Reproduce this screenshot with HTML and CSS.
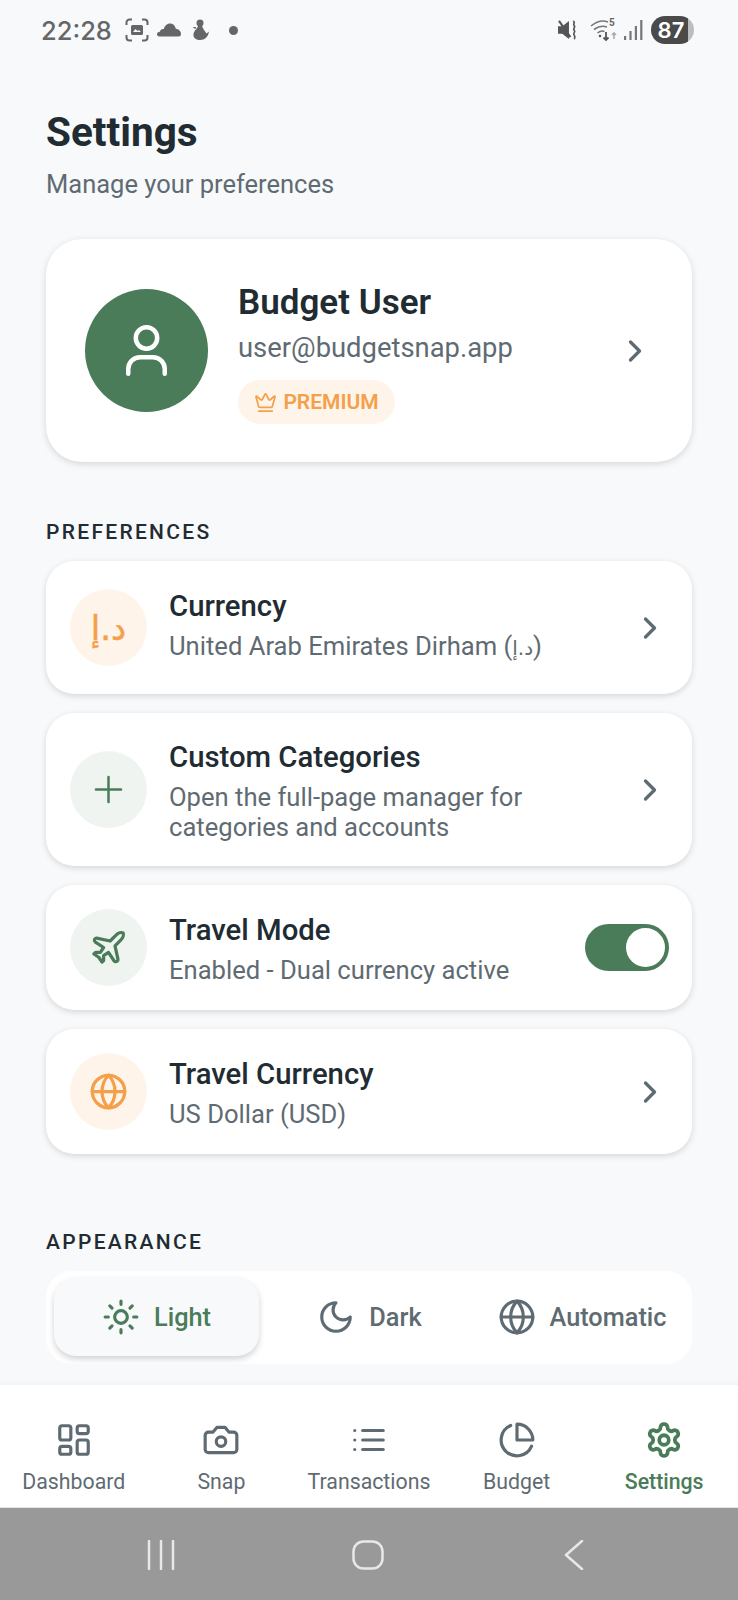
FILE: index.html
```html
<!DOCTYPE html>
<html lang="en">
<head>
<meta charset="utf-8">
<title>Settings</title>
<link rel="stylesheet" href="styles.css">
</head>
<body>
<svg class="defs" width="0" height="0" aria-hidden="true">
  <symbol id="chev" viewBox="0 0 24 24"><path d="m9 18 6-6-6-6"/></symbol>
  <symbol id="globe" viewBox="0 0 24 24"><circle cx="12" cy="12" r="10"/><path d="M12 2a14.5 14.5 0 0 0 0 20 14.5 14.5 0 0 0 0-20"/><path d="M2 12h20"/></symbol>
</svg>
<div class="app">
  <header class="status">
    <div class="status-left">
      <span class="time">22:28</span>
      <svg class="st st-shot" viewBox="0 0 24 24"><path d="M1.5 7V4.5a3 3 0 0 1 3-3H7M17 1.500h2.500a3 3 0 0 1 3 3V7M22.500 17v2.500a3 3 0 0 1-3 3H17M7 22.500H4.500a3 3 0 0 1-3-3V17" fill="none" stroke="#666" stroke-width="2"/><rect x="6" y="7" width="12" height="10" rx="1.500" fill="#666"/><path d="m8 14 2.500-3 2 2 1.500-1 2 2z" fill="#f8f9fb"/></svg>
      <svg class="st st-cloud" viewBox="0 0 24 14"><path d="M2.500 13.500C.6 13.500 0 12.400 0 11.300c0-1.500 1.200-2.600 2.900-2.600C3.400 6.800 5 5.800 6.600 6.200 7.700 2.500 10.300.5 13 .5c3 0 5.300 2.200 5.800 5.300 2.900.2 5.200 2.500 5.200 5.200 0 1.700-1 2.500-2.500 2.500z" fill="#666"/></svg>
      <svg class="st st-duck" viewBox="0 0 18 22"><circle cx="8" cy="4" r="3.500" fill="#666"/><path d="M6 7c-.6 2.500-4 4.500-4.500 8C1 18.500 3.500 21 8 21c5 0 8-3 9-8.500l-2.500 2C13 12 11 10 10 7z" fill="#666"/><path d="M1 8h3v1.500H2z" fill="#666"/></svg>
      <span class="st-dot"></span>
    </div>
    <div class="status-right">
      <svg class="st st-mute" viewBox="0 0 22 21"><path d="M0 6.500v8h4.500l7 5.500V1l-7 5.500z" fill="#555"/><path d="M1 1l12 17" stroke="#555" stroke-width="2.200"/><path d="M16 1c3 2-1 3 1 5s-2 3 0 5-2 3 0 5-1 3 1 4" fill="none" stroke="#555" stroke-width="1.800"/></svg>
      <svg class="st st-wifi" viewBox="0 0 28 24"><path d="M1 8c6-5 12-6 17-4M4 11.500c4-3 9-4 13-2.500M7.500 15c2.500-2 5-2.500 7-1.500" fill="none" stroke="#777" stroke-width="1.600"/><circle cx="10" cy="18" r="1.300" fill="#555"/><path d="M16 14v8m-2.500-2.500L16 22l2.500-2.500" fill="none" stroke="#555" stroke-width="1.800"/><path d="M24 21v-6m-2 2 2-2 2 2" fill="none" stroke="#aaa" stroke-width="1.600"/><text x="19" y="8" class="wifi-five">5</text></svg>
      <svg class="st st-signal" viewBox="0 0 19 20"><rect x="0" y="16" width="2.200" height="4" fill="#777"/><rect x="5.400" y="11" width="2.200" height="9" fill="#777"/><rect x="10.800" y="6" width="2.200" height="14" fill="#777"/><rect x="16.200" y="0" width="2.200" height="20" fill="#777"/></svg>
      <span class="battery"><span class="battery-num">87</span></span>
    </div>
  </header>

  <main class="content">
    <h1 class="page-title">Settings</h1>
    <p class="page-sub">Manage your preferences</p>

    <section class="profile">
      <div class="avatar">
        <svg class="avatar-ico" viewBox="0 0 41 51"><circle cx="20.500" cy="13" r="10.700"/><path d="M2.250 48.750V44a11.800 11.800 0 0 1 11.800-11.800h12.900a11.800 11.800 0 0 1 11.800 11.800v4.750"/></svg>
      </div>
      <div class="profile-text">
        <div class="profile-name">Budget User</div>
        <div class="profile-mail">user@budgetsnap.app</div>
        <span class="badge">
          <svg class="badge-ico" viewBox="0 0 24 24"><path d="M11.562 3.266a.5.5 0 0 1 .876 0L15.390 8.870a1 1 0 0 0 1.516.294L21.183 5.500a.5.5 0 0 1 .798.519l-2.834 10.246a1 1 0 0 1-.956.734H5.810a1 1 0 0 1-.957-.734L2.020 6.020a.5.5 0 0 1 .798-.519l4.276 3.664a1 1 0 0 0 1.516-.294z"/><path d="M5 21h14"/></svg>
          PREMIUM
        </span>
      </div>
      <svg class="chev"><use href="#chev"/></svg>
    </section>

    <h2 class="section-label">PREFERENCES</h2>
    <div class="rows">
      <div class="row row-tall">
        <span class="ico-wrap ico-orange"><span class="aed">د.إ</span></span>
        <div class="row-text"><div class="row-title">Currency</div><div class="row-sub">United Arab Emirates Dirham (<span class="ar">د.إ</span>)</div></div>
        <svg class="chev"><use href="#chev"/></svg>
      </div>
      <div class="row">
        <span class="ico-wrap ico-green"><svg class="ico ico-plus" viewBox="0 0 24 24"><path d="M5 12h14M12 5v14"/></svg></span>
        <div class="row-text"><div class="row-title">Custom Categories</div><div class="row-sub">Open the full-page manager for<br>categories and accounts</div></div>
        <svg class="chev"><use href="#chev"/></svg>
      </div>
      <div class="row">
        <span class="ico-wrap ico-green"><svg class="ico" viewBox="0 0 24 24"><path d="M17.800 19.200 16 11l3.500-3.500C21 6 21.500 4 21 3c-1-.5-3 0-4.500 1.500L13 8 4.800 6.200c-.5-.1-.9.1-1.100.5l-.3.5c-.2.5-.1 1 .3 1.300L9 12l-2 3H4l-1 1 3 2 2 3 1-1v-3l3-2 3.500 5.300c.3.4.8.5 1.300.3l.5-.2c.4-.3.6-.7.5-1.200z"/></svg></span>
        <div class="row-text"><div class="row-title">Travel Mode</div><div class="row-sub">Enabled - Dual currency active</div></div>
        <span class="toggle"><span class="knob"></span></span>
      </div>
      <div class="row">
        <span class="ico-wrap ico-orange"><svg class="ico"><use href="#globe"/></svg></span>
        <div class="row-text"><div class="row-title">Travel Currency</div><div class="row-sub">US Dollar (USD)</div></div>
        <svg class="chev"><use href="#chev"/></svg>
      </div>
    </div>

    <h2 class="section-label section-label-2">APPEARANCE</h2>
    <div class="segment">
      <div class="seg seg-active">
        <svg class="seg-ico" viewBox="0 0 24 24"><circle cx="12" cy="12" r="4"/><path d="M12 2v2M12 20v2M4.930 4.930l1.410 1.410M17.660 17.660l1.410 1.410M2 12h2M20 12h2M6.340 17.660l-1.410 1.410M19.070 4.930l-1.410 1.410"/></svg>
        Light
      </div>
      <div class="seg">
        <svg class="seg-ico" viewBox="0 0 24 24"><path d="M12 3a6 6 0 0 0 9 9 9 9 0 1 1-9-9Z"/></svg>
        Dark
      </div>
      <div class="seg">
        <svg class="seg-ico"><use href="#globe"/></svg>
        Automatic
      </div>
    </div>
  </main>

  <nav class="tabbar">
    <div class="tab">
      <svg class="tab-ico" viewBox="0 0 24 24"><rect x="3" y="3" width="7" height="9" rx="1.500"/><rect x="14" y="3" width="7" height="5" rx="1.500"/><rect x="14" y="12" width="7" height="9" rx="1.500"/><rect x="3" y="16" width="7" height="5" rx="1.500"/></svg>
      <span>Dashboard</span>
    </div>
    <div class="tab">
      <svg class="tab-ico" viewBox="0 0 24 24"><path d="M14.500 4h-5L7 7H4a2 2 0 0 0-2 2v9a2 2 0 0 0 2 2h16a2 2 0 0 0 2-2V9a2 2 0 0 0-2-2h-3l-2.500-3z"/><circle cx="12" cy="13" r="3"/></svg>
      <span>Snap</span>
    </div>
    <div class="tab">
      <svg class="tab-ico" viewBox="0 0 24 24"><path d="M3 6h.01M3 12h.01M3 18h.01M8 6h13M8 12h13M8 18h13"/></svg>
      <span>Transactions</span>
    </div>
    <div class="tab">
      <svg class="tab-ico" viewBox="0 0 24 24"><path d="M21.210 15.890A10 10 0 1 1 8 2.830"/><path d="M22 12A10 10 0 0 0 12 2v10z"/></svg>
      <span>Budget</span>
    </div>
    <div class="tab tab-active">
      <svg class="tab-ico" viewBox="0 0 24 24"><path d="M12.220 2h-.44a2 2 0 0 0-2 2v.18a2 2 0 0 1-1 1.730l-.43.25a2 2 0 0 1-2 0l-.15-.08a2 2 0 0 0-2.730.73l-.22.38a2 2 0 0 0 .73 2.730l.15.1a2 2 0 0 1 1 1.720v.51a2 2 0 0 1-1 1.740l-.15.09a2 2 0 0 0-.73 2.730l.22.38a2 2 0 0 0 2.730.73l.15-.08a2 2 0 0 1 2 0l.43.25a2 2 0 0 1 1 1.730V20a2 2 0 0 0 2 2h.44a2 2 0 0 0 2-2v-.18a2 2 0 0 1 1-1.730l.43-.25a2 2 0 0 1 2 0l.15.08a2 2 0 0 0 2.730-.73l.22-.39a2 2 0 0 0-.73-2.730l-.15-.08a2 2 0 0 1-1-1.740v-.5a2 2 0 0 1 1-1.740l.15-.09a2 2 0 0 0 .73-2.730l-.22-.38a2 2 0 0 0-2.730-.73l-.15.08a2 2 0 0 1-2 0l-.43-.25a2 2 0 0 1-1-1.730V4a2 2 0 0 0-2-2z"/><circle cx="12" cy="12" r="3"/></svg>
      <span>Settings</span>
    </div>
  </nav>

  <div class="sysnav">
    <svg class="sys sys-recent" viewBox="0 0 28 30"><path d="M2 1v28M14 1v28M26 1v28"/></svg>
    <svg class="sys sys-home" viewBox="0 0 32 30"><rect x="1.500" y="1.500" width="29" height="27" rx="10"/></svg>
    <svg class="sys sys-back" viewBox="0 0 20 30"><path d="M18 1 2 15l16 14"/></svg>
  </div>
</div>
</body>
</html>
```

FILE: styles.css
```css
* { box-sizing: border-box; }
html, body { margin: 0; padding: 0; }
body { background: #f8f9fb; font-family: Roboto, "DejaVu Sans", sans-serif; color: #212b32; }
.defs { position: absolute; }
.app { width: 738px; height: 1600px; display: flex; flex-direction: column; overflow: hidden; }

/* status bar */
.status { height: 60px; flex: none; padding: 0 44px 0 41px; display: flex; justify-content: space-between; align-items: center; }
.status-left, .status-right { display: flex; align-items: center; }
.time { font-family: Inter, "Liberation Sans", sans-serif; font-size: 25.500px; font-weight: 500; color: #666; width: 84px; }
.st { display: block; flex: none; }
.st-shot { width: 24px; height: 24px; }
.st-cloud { width: 24px; height: 14px; margin-left: 8px; }
.st-duck { width: 18px; height: 22px; margin-left: 11px; }
.st-dot { width: 9px; height: 9px; border-radius: 50%; background: #666; margin-left: 19px; }
.st-mute { width: 21px; height: 20px; }
.st-wifi { width: 28px; height: 24px; margin-left: 11px; }
.wifi-five { font-family: Roboto, sans-serif; font-size: 10px; font-weight: 700; fill: #666; }
.st-signal { width: 19px; height: 20px; margin-left: 6px; }
.battery { width: 43px; height: 28px; margin-left: 8px; border-radius: 14px; background: linear-gradient(90deg, #4a4a4a 87%, #bdbdbd 87%); color: #fff; font-family: Inter, "Liberation Sans", sans-serif; font-size: 22px; font-weight: 600; display: flex; align-items: center; justify-content: center; }
.battery-num { margin-right: 3px; }

/* content */
.content { flex: 1; min-height: 0; padding: 47px 46px 0; box-shadow: inset 0 -6px 6px -6px rgba(0,0,0,.05); }
.page-title { margin: 0; font-size: 40.500px; line-height: 50px; font-weight: 700; }
.page-sub { margin: 12px 0 0; font-size: 25.500px; line-height: 30px; color: #5f6b72; }

.profile { margin-top: 40px; height: 223px; padding: 0 39px; border-radius: 36px; background: #fff; box-shadow: 0 2px 7px rgba(0,0,0,.14); display: flex; align-items: center; gap: 30px; }
.avatar { width: 123px; height: 123px; flex: none; border-radius: 50%; background: #4a7c59; display: flex; align-items: center; justify-content: center; }
.avatar-ico { width: 41px; height: 51px; fill: none; stroke: #fff; stroke-width: 4.500; stroke-linecap: round; }
.profile-text { flex: 1; min-width: 0; padding-top: 5px; }
.profile-name { font-size: 35px; line-height: 40px; font-weight: 600; transform: translateY(1px); }
.profile-mail { margin-top: 10px; font-size: 27.400px; line-height: 32px; color: #5f6b72; }
.badge { margin-top: 16px; height: 44px; width: 157px; border-radius: 22px; background: #fff4ea; color: #f4a04a; font-size: 21px; font-weight: 600; display: flex; align-items: center; justify-content: center; gap: 6px; }
.badge-ico { width: 23px; height: 23px; fill: none; stroke: currentColor; stroke-width: 1.800; stroke-linecap: round; stroke-linejoin: round; }
.chev { width: 36px; height: 36px; flex: none; fill: none; stroke: #5f6b72; stroke-width: 2.200; stroke-linecap: round; stroke-linejoin: round; }

.section-label { margin: 57px 0 0; font-size: 21px; line-height: 26px; font-weight: 500; letter-spacing: 2.300px; color: #212b32; }
.section-label-2 { margin-top: 75px; }

.rows { margin-top: 16px; display: flex; flex-direction: column; gap: 19px; }
.row { padding: 24px 23px 24px 24px; border-radius: 28px; background: #fff; box-shadow: 0 2px 6px rgba(0,0,0,.14); display: flex; align-items: center; gap: 22px; }
.row .chev { margin-right: 1px; }
.row-tall { padding-top: 25px; padding-bottom: 25px; }
.row-tall .row-text { margin-bottom: 8px; }
.ico-wrap { width: 77px; height: 77px; flex: none; border-radius: 50%; display: flex; align-items: center; justify-content: center; }
.ico-orange { background: #fff4ea; color: #f4a04a; }
.ico-green { background: #eff4f0; color: #4a7c59; }
.ico { width: 39px; height: 39px; fill: none; stroke: currentColor; stroke-width: 2; stroke-linecap: round; stroke-linejoin: round; }
.ico-plus { width: 43px; height: 43px; stroke-width: 1.400; }
.aed { font-family: "DejaVu Sans", sans-serif; font-size: 34px; line-height: 1; font-weight: 400; -webkit-text-stroke: 0.5px currentColor; }
.row-text { flex: 1; min-width: 0; }
.row-title { font-size: 29.300px; line-height: 40px; font-weight: 500; }
.row-sub { margin-top: 5px; font-size: 25.600px; line-height: 30px; color: #5f6b72; }
.ar { font-family: "DejaVu Sans", sans-serif; font-size: 20px; line-height: 0; }
.toggle { width: 84px; height: 47px; flex: none; border-radius: 24px; background: #4a7c59; padding: 4px; display: flex; justify-content: flex-end; }
.knob { width: 39px; height: 39px; border-radius: 50%; background: #fff; }

.segment { margin-top: 16px; height: 93px; padding: 7px 8px 8px; border-radius: 26px; background: #fff; display: grid; grid-template-columns: 205px 1fr 204px; }
.seg { border-radius: 22px; display: flex; align-items: center; justify-content: center; gap: 14px; font-size: 25.300px; font-weight: 500; color: #5f6b72; }
.seg-active { background: #f8f9fb; color: #4a7c59; box-shadow: 0 3px 6px rgba(0,0,0,.18); }
.seg-ico { width: 38px; height: 38px; flex: none; fill: none; stroke: currentColor; stroke-width: 2; stroke-linecap: round; stroke-linejoin: round; }

/* tab bar */
.tabbar { height: 123px; flex: none; background: #fff; display: grid; grid-template-columns: repeat(5, 1fr); border-bottom: 1px solid #e4e4e4; }
.tab { display: flex; flex-direction: column; align-items: center; padding-top: 36px; font-size: 21.300px; line-height: 26px; font-weight: 400; color: #5f6b72; }
.tab-active { color: #4a7c59; font-weight: 500; }
.tab-ico { width: 38px; height: 38px; margin-bottom: 10px; flex: none; fill: none; stroke: currentColor; stroke-width: 2; stroke-linecap: round; stroke-linejoin: round; }
.tab-active .tab-ico { stroke-width: 2.400; }

.sysnav { height: 92px; flex: none; background: #999; display: grid; grid-template-columns: 1fr 1fr 1fr; align-items: center; justify-items: center; padding: 2px 56px 0; }
.sys { fill: none; stroke: #e8e8e8; stroke-width: 2.500; stroke-linecap: round; stroke-linejoin: round; }
.sys-recent { width: 28px; height: 30px; margin-left: 2px; }
.sys-home { width: 32px; height: 30px; margin-right: 2px; }
.sys-back { width: 20px; height: 30px; margin-right: 7px; }
```
